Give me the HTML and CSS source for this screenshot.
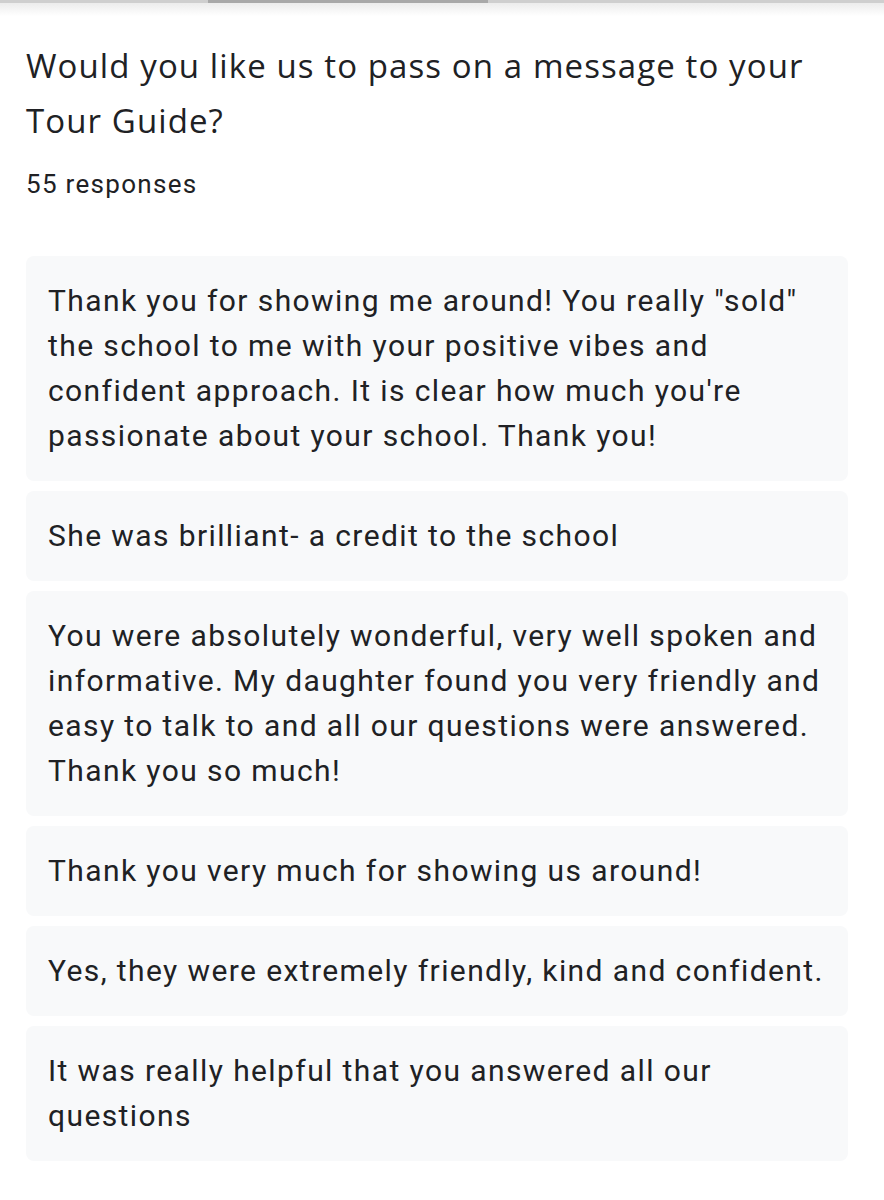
FILE: index.html
```html
<!DOCTYPE html>
<html>
<head>
<meta charset="utf-8">
<link rel="stylesheet" href="styles.css">
</head>
<body>
<div class="topbar"><div class="thumb"></div></div>
<main class="page">
  <h1 class="title">Would you like us to pass on a message to your Tour Guide?</h1>
  <div class="count">55 responses</div>
  <div class="list">
    <div class="card">Thank you for showing me around! You really "sold" the school to me with your positive vibes and confident approach. It is clear how much you're passionate about your school. Thank you!</div>
    <div class="card">She was brilliant- a credit to the school</div>
    <div class="card">You were absolutely wonderful, very well spoken and informative. My daughter found you very friendly and easy to talk to and all our questions were answered. Thank you so much!</div>
    <div class="card">Thank you very much for showing us around!</div>
    <div class="card">Yes, they were extremely friendly, kind and confident.</div>
    <div class="card">It was really helpful that you answered all our questions</div>
  </div>
</main>
</body>
</html>
```
FILE: styles.css
```css
html, body { margin: 0; padding: 0; background: #fff; }
body { font-family: Roboto, "Liberation Sans", sans-serif; color: #202124; }
.topbar {
  height: 16px;
  border-top: 3px solid #cfcfcf;
  background: linear-gradient(#ececec, #fff);
  box-sizing: border-box;
  position: relative;
}
.thumb {
  position: absolute; left: 208px; top: -3px; width: 280px; height: 3px; background: #a9a9a9;
}
.page { padding: 0 36px 0 26px; }
.title {
  margin: 22px 0 0;
  font-family: "Open Sans", Roboto, sans-serif;
  font-weight: 400; font-size: 33px; line-height: 55px; letter-spacing: 1.1px; color: #202124;
  width: 800px;
}
.count { margin-top: 21px; font-size: 26px; line-height: 30px; letter-spacing: 1.3px; color: #202124; }
.list { margin-top: 57px; display: flex; flex-direction: column; gap: 10px; width: 822px; }
.card {
  background: #f8f9fa; border-radius: 8px;
  padding: 22px 22px 23px;
  font-size: 30px; line-height: 45px; letter-spacing: 1.4px; color: #202124;
}
```
